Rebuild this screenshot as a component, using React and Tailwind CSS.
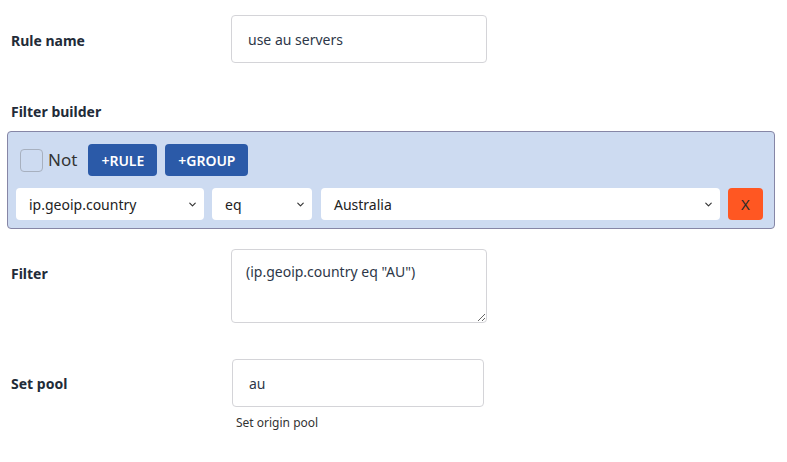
import { FiChevronDown } from "react-icons/fi";

function Select({ value, className }) {
  return (
    <div
      className={`flex h-8 items-center justify-between rounded bg-white pl-[13px] pr-[6px] text-[14px] text-[#222] ${className}`}
    >
      <span>{value}</span>
      <FiChevronDown className="h-[11px] w-[11px] text-[#333]" strokeWidth={2.5} />
    </div>
  );
}

export default function App() {
  return (
    <div className="min-h-[462px] bg-white px-[7px] font-['Noto_Sans',sans-serif] text-[#1f2937]">
      {/* Rule name */}
      <div className="flex pt-[15px]">
        <div className="flex h-12 w-[224px] items-center pl-1 pt-[3px] text-[14px] font-bold text-[#222b38]">
          Rule name
        </div>
        <div className="flex h-12 w-[256px] items-center rounded border border-[#d4d4d8] px-4 text-[14px] text-[#2d3748]">
          use au servers
        </div>
      </div>

      {/* Filter builder */}
      <div className="mt-[39px] mb-[9px] pl-1 text-[14px] font-bold leading-5 text-[#222b38]">
        Filter builder
      </div>
      <div className="w-[768px] rounded border border-[#8686a6] bg-[#cddbf1] pb-2 pl-2 pr-[11px] pt-3">
        <div className="flex h-8 items-center gap-2">
          <div className="ml-1 flex items-center gap-[5px]">
            <span className="h-[23px] w-[23px] rounded border border-[#a7b0bf] bg-[#cddbf1]" />
            <span className="text-[17px] text-[#333]">Not</span>
          </div>
          <button className="ml-[3px] h-8 w-[69px] rounded bg-[#2b5aa8] text-[14px] font-semibold text-white">
            +RULE
          </button>
          <button className="h-8 w-[83px] rounded bg-[#2b5aa8] text-[14px] font-semibold text-white">
            +GROUP
          </button>
        </div>
        <div className="mt-3 flex items-center">
          <Select value="ip.geoip.country" className="w-[188px]" />
          <Select value="eq" className="ml-2 w-[100px]" />
          <Select value="Australia" className="ml-[9px] w-[399px]" />
          <button className="ml-2 h-8 w-[35px] rounded bg-[#ff5722] text-[15px] text-[#2a2a2a]">
            X
          </button>
        </div>
      </div>

      {/* Filter */}
      <div className="mt-5 flex">
        <div className="flex h-12 w-[224px] items-center pl-1 text-[14px] font-bold text-[#222b38]">
          Filter
        </div>
        <textarea
          readOnly
          value={'(ip.geoip.country eq "AU")'}
          className="h-[74px] w-[256px] rounded border border-[#d4d4d8] px-[14px] py-[11px] text-[14px] text-[#2d3748] outline-none"
        />
      </div>

      {/* Set pool */}
      <div className="mt-9 flex">
        <div className="flex h-12 w-[225px] items-center pl-1 text-[14px] font-bold text-[#222b38]">
          Set pool
        </div>
        <div>
          <div className="flex h-12 w-[252px] items-center rounded border border-[#d4d4d8] px-4 text-[14px] text-[#2d3748]">
            au
          </div>
          <div className="mt-[7px] pl-1 text-[12px] text-[#333]">Set origin pool</div>
        </div>
      </div>
    </div>
  );
}
